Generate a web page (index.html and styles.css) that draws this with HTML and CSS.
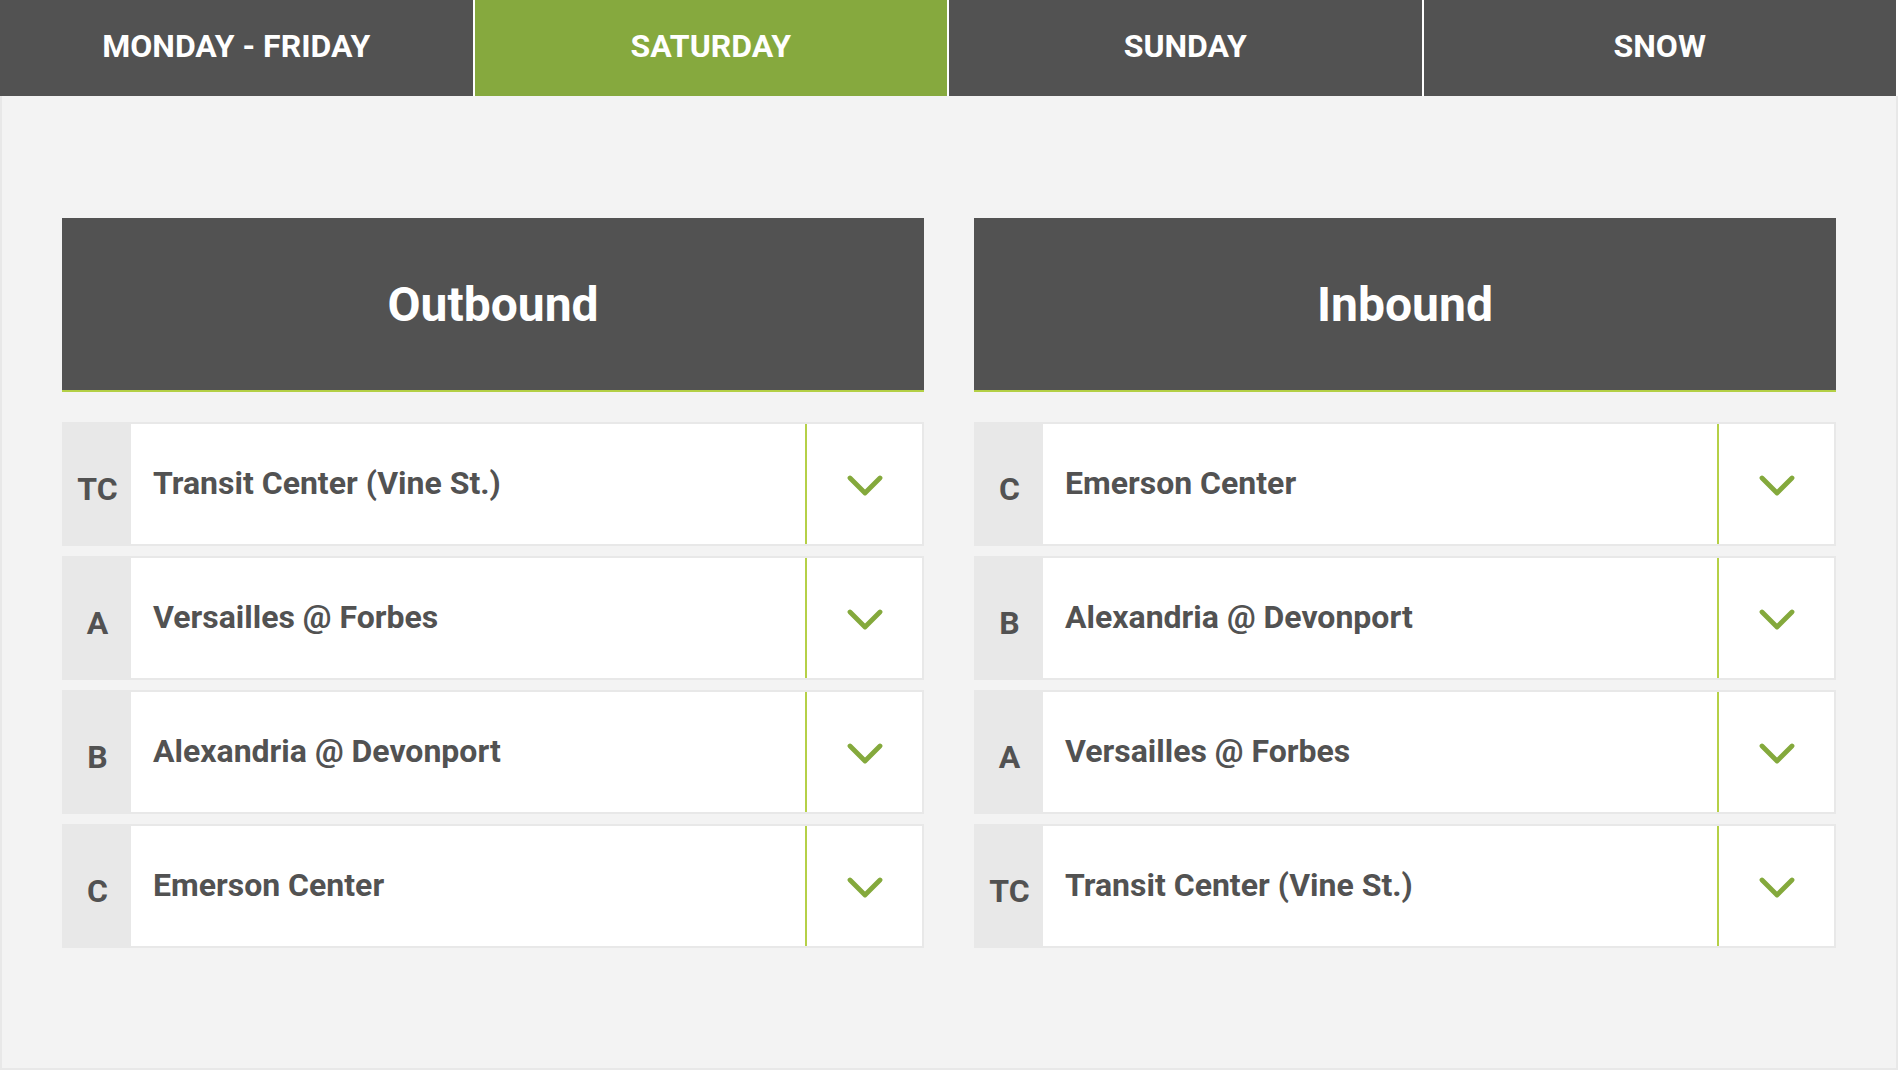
FILE: index.html
```html
<!DOCTYPE html>
<html>
<head>
<meta charset="utf-8">
<link rel="stylesheet" href="styles.css">
</head>
<body>
<nav class="tabs">
  <div class="tab">Monday - Friday</div>
  <div class="tab active">Saturday</div>
  <div class="tab">Sunday</div>
  <div class="tab">Snow</div>
</nav>
<main class="content">
  <section class="column">
    <h2 class="col-head">Outbound</h2>
    <div class="stops">
      <div class="stop"><div class="code">TC</div><div class="name">Transit Center (Vine St.)</div><div class="toggle"><svg width="36" height="22" viewBox="0 0 36 22"><polyline points="3,3 18,18 33,3" fill="none" stroke="#84a93c" stroke-width="4.8" stroke-linecap="round" stroke-linejoin="round"/></svg></div></div>
      <div class="stop"><div class="code">A</div><div class="name">Versailles @ Forbes</div><div class="toggle"><svg width="36" height="22" viewBox="0 0 36 22"><polyline points="3,3 18,18 33,3" fill="none" stroke="#84a93c" stroke-width="4.8" stroke-linecap="round" stroke-linejoin="round"/></svg></div></div>
      <div class="stop"><div class="code">B</div><div class="name">Alexandria @ Devonport</div><div class="toggle"><svg width="36" height="22" viewBox="0 0 36 22"><polyline points="3,3 18,18 33,3" fill="none" stroke="#84a93c" stroke-width="4.8" stroke-linecap="round" stroke-linejoin="round"/></svg></div></div>
      <div class="stop"><div class="code">C</div><div class="name">Emerson Center</div><div class="toggle"><svg width="36" height="22" viewBox="0 0 36 22"><polyline points="3,3 18,18 33,3" fill="none" stroke="#84a93c" stroke-width="4.8" stroke-linecap="round" stroke-linejoin="round"/></svg></div></div>
    </div>
  </section>
  <section class="column">
    <h2 class="col-head">Inbound</h2>
    <div class="stops">
      <div class="stop"><div class="code">C</div><div class="name">Emerson Center</div><div class="toggle"><svg width="36" height="22" viewBox="0 0 36 22"><polyline points="3,3 18,18 33,3" fill="none" stroke="#84a93c" stroke-width="4.8" stroke-linecap="round" stroke-linejoin="round"/></svg></div></div>
      <div class="stop"><div class="code">B</div><div class="name">Alexandria @ Devonport</div><div class="toggle"><svg width="36" height="22" viewBox="0 0 36 22"><polyline points="3,3 18,18 33,3" fill="none" stroke="#84a93c" stroke-width="4.8" stroke-linecap="round" stroke-linejoin="round"/></svg></div></div>
      <div class="stop"><div class="code">A</div><div class="name">Versailles @ Forbes</div><div class="toggle"><svg width="36" height="22" viewBox="0 0 36 22"><polyline points="3,3 18,18 33,3" fill="none" stroke="#84a93c" stroke-width="4.8" stroke-linecap="round" stroke-linejoin="round"/></svg></div></div>
      <div class="stop"><div class="code">TC</div><div class="name">Transit Center (Vine St.)</div><div class="toggle"><svg width="36" height="22" viewBox="0 0 36 22"><polyline points="3,3 18,18 33,3" fill="none" stroke="#84a93c" stroke-width="4.8" stroke-linecap="round" stroke-linejoin="round"/></svg></div></div>
    </div>
  </section>
</main>
</body>
</html>
```
FILE: styles.css
```css
* { box-sizing: border-box; }
html, body { margin: 0; padding: 0; background: #ffffff; }
body {
  font-family: Roboto, "Liberation Sans", Arial, sans-serif;
  width: 1898px;
}
.tabs {
  display: flex;
  gap: 2px;
  width: 1896px;
  height: 96px;
}
.tab {
  flex: 1;
  background: #525252;
  color: #ffffff;
  font-weight: 700;
  font-size: 32px;
  text-transform: uppercase;
  display: flex;
  align-items: center;
  justify-content: center;
  padding-bottom: 4px;
}
.tab.active { background: #86a93e; }
.content {
  display: grid;
  grid-template-columns: 862px 862px;
  column-gap: 50px;
  height: 974px;
  background: #f3f3f3;
  border: 2px solid #e8e8e8;
  border-top: none;
  padding: 122px 60px 0 60px;
  align-content: start;
}
.col-head {
  margin: 0;
  height: 174px;
  background: #525252;
  border-bottom: 2px solid #b3cf45;
  color: #ffffff;
  font-size: 48px;
  font-weight: 700;
  display: flex;
  align-items: center;
  justify-content: center;
}
.stops {
  margin-top: 30px;
  display: flex;
  flex-direction: column;
  gap: 10px;
}
.stop {
  display: flex;
  height: 124px;
  background: #ffffff;
  border: 2px solid #e8e8e8;
  border-left: none;
  color: #525252;
  font-weight: 700;
}
.code {
  width: 69px;
  margin-top: -2px;
  margin-bottom: -2px;
  background: #e8e8e8;
  font-size: 32px;
  display: flex;
  align-items: center;
  justify-content: center;
  padding-top: 10px;
  padding-left: 2px;
}
.name {
  flex: 1;
  padding-left: 22px;
  font-size: 32px;
  display: flex;
  align-items: center;
  padding-bottom: 2px;
}
.toggle {
  width: 117px;
  border-left: 2px solid #b5d047;
  display: flex;
  align-items: center;
  justify-content: center;
  padding-top: 4px;
}
.toggle svg { display: block; }
```
